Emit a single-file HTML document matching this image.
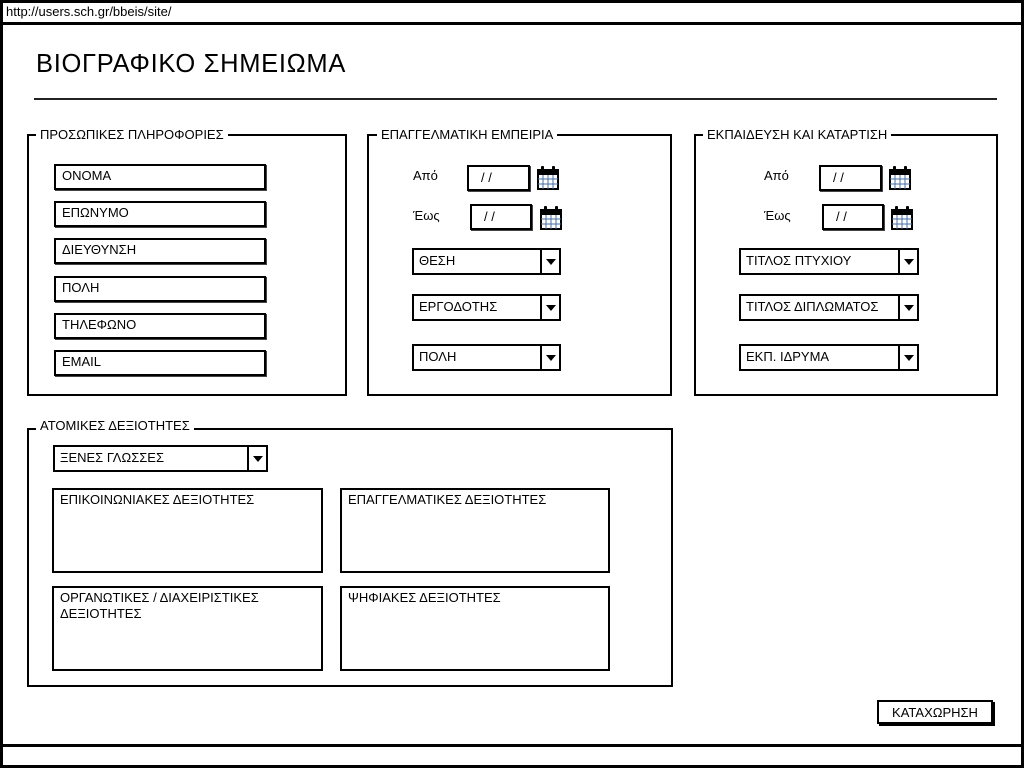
<!DOCTYPE html>
<html><head><meta charset="utf-8"><style>
*{box-sizing:border-box;margin:0;padding:0}
body{width:1024px;height:768px;position:relative;background:#fff;font-family:"Liberation Sans","DejaVu Sans",sans-serif;color:#000;overflow:hidden}
.a{position:absolute}
.frame{left:0;top:0;width:1024px;height:768px;border:3px solid #000}
.url{left:0;top:0;width:1024px;height:25px;border-bottom:3px solid #000;font-size:13px;padding:4px 0 0 6px}
.bot{left:0;top:744px;width:1024px;height:3px;background:#000}
.title{left:36px;top:50px;font-size:25.5px;letter-spacing:0.7px}
.hr{left:34px;top:98px;width:963px;height:2px;background:#222}
.grp{border:2.5px solid #000}
.lbl{background:#fff;font-size:13px;padding:0 4px;white-space:nowrap}
.in{border:2.5px solid #000;height:26px;font-size:13px;padding:2px 0 0 6px;box-shadow:1px 1px 0 #444}
.sel{border:2.5px solid #000;height:27px;font-size:13px;padding:3px 0 0 5px}
.sel .arr{position:absolute;right:0;top:0;width:19px;height:100%;border-left:2px solid #000}
.sel .arr:after{content:"";position:absolute;left:4px;top:9px;border-left:5px solid transparent;border-right:5px solid transparent;border-top:6px solid #000}
.date{border:2.5px solid #000;height:26px;font-size:13px;padding:3px 0 0 12px;box-shadow:1px 1px 0 #444}
.ta{border:2.5px solid #000;font-size:13px;padding:2px 6px;line-height:16px}
.t{font-size:13px}
.btn{left:877px;top:700px;width:116px;height:24px;border:2px solid #000;box-shadow:2px 2px 0 #000;font-size:13px;text-align:center;padding-top:3px}
</style></head><body>
<div class="a frame"></div>
<div class="a url">http://users.sch.gr/bbeis/site/</div>
<div class="a bot"></div>
<div class="a title">ΒΙΟΓΡΑΦΙΚΟ ΣΗΜΕΙΩΜΑ</div>
<div class="a hr"></div>

<svg width="0" height="0" style="position:absolute"><defs><g id="cal"><rect x="1" y="4" width="20" height="19" fill="#fff" stroke="#000" stroke-width="2"/><rect x="1" y="4" width="20" height="5" fill="#000"/><path d="M1 13H21M1 18H21M6 9V23M11 9V23M16 9V23" stroke="#4a6fa5" stroke-width="1"/><rect x="4" y="0" width="3" height="7" rx="1" fill="#000"/><rect x="15" y="0" width="3" height="7" rx="1" fill="#000"/></g></defs></svg>

<div class="a grp" style="left:27px;top:134px;width:320px;height:262px"></div>
<div class="a lbl" style="left:36px;top:127px">ΠΡΟΣΩΠΙΚΕΣ ΠΛΗΡΟΦΟΡΙΕΣ</div>
<div class="a in" style="left:54px;top:164px;width:212px">ΟΝΟΜΑ</div>
<div class="a in" style="left:54px;top:201px;width:212px">ΕΠΩΝΥΜΟ</div>
<div class="a in" style="left:54px;top:238px;width:212px">ΔΙΕΥΘΥΝΣΗ</div>
<div class="a in" style="left:54px;top:276px;width:212px">ΠΟΛΗ</div>
<div class="a in" style="left:54px;top:313px;width:212px">ΤΗΛΕΦΩΝΟ</div>
<div class="a in" style="left:54px;top:350px;width:212px">EMAIL</div>

<div class="a grp" style="left:367px;top:134px;width:305px;height:262px"></div>
<div class="a lbl" style="left:377px;top:127px">ΕΠΑΓΓΕΛΜΑΤΙΚΗ ΕΜΠΕΙΡΙΑ</div>
<div class="a t" style="left:413px;top:168px">Από</div>
<div class="a date" style="left:467px;top:165px;width:63px">/ /</div>
<svg class="a" style="left:537px;top:166px" width="23" height="24"><use href="#cal"/></svg>
<div class="a t" style="left:413px;top:208px">Έως</div>
<div class="a date" style="left:470px;top:204px;width:62px">/ /</div>
<svg class="a" style="left:540px;top:206px" width="23" height="24"><use href="#cal"/></svg>
<div class="a sel" style="left:412px;top:248px;width:149px">ΘΕΣΗ<span class="arr"></span></div>
<div class="a sel" style="left:412px;top:294px;width:149px">ΕΡΓΟΔΟΤΗΣ<span class="arr"></span></div>
<div class="a sel" style="left:412px;top:344px;width:149px">ΠΟΛΗ<span class="arr"></span></div>

<div class="a grp" style="left:694px;top:134px;width:304px;height:262px"></div>
<div class="a lbl" style="left:703px;top:127px">ΕΚΠΑΙΔΕΥΣΗ ΚΑΙ ΚΑΤΑΡΤΙΣΗ</div>
<div class="a t" style="left:764px;top:168px">Από</div>
<div class="a date" style="left:819px;top:165px;width:63px">/ /</div>
<svg class="a" style="left:889px;top:166px" width="23" height="24"><use href="#cal"/></svg>
<div class="a t" style="left:764px;top:208px">Έως</div>
<div class="a date" style="left:822px;top:204px;width:62px">/ /</div>
<svg class="a" style="left:891px;top:206px" width="23" height="24"><use href="#cal"/></svg>
<div class="a sel" style="left:739px;top:248px;width:180px">ΤΙΤΛΟΣ ΠΤΥΧΙΟΥ<span class="arr"></span></div>
<div class="a sel" style="left:739px;top:294px;width:180px">ΤΙΤΛΟΣ ΔΙΠΛΩΜΑΤΟΣ<span class="arr"></span></div>
<div class="a sel" style="left:739px;top:344px;width:180px">ΕΚΠ. ΙΔΡΥΜΑ<span class="arr"></span></div>

<div class="a grp" style="left:27px;top:428px;width:646px;height:259px"></div>
<div class="a lbl" style="left:36px;top:418px">ΑΤΟΜΙΚΕΣ ΔΕΞΙΟΤΗΤΕΣ</div>
<div class="a sel" style="left:53px;top:445px;width:215px">ΞΕΝΕΣ ΓΛΩΣΣΕΣ<span class="arr"></span></div>
<div class="a ta" style="left:52px;top:488px;width:271px;height:85px">ΕΠΙΚΟΙΝΩΝΙΑΚΕΣ ΔΕΞΙΟΤΗΤΕΣ</div>
<div class="a ta" style="left:340px;top:488px;width:270px;height:85px">ΕΠΑΓΓΕΛΜΑΤΙΚΕΣ ΔΕΞΙΟΤΗΤΕΣ</div>
<div class="a ta" style="left:52px;top:586px;width:271px;height:85px">ΟΡΓΑΝΩΤΙΚΕΣ / ΔΙΑΧΕΙΡΙΣΤΙΚΕΣ ΔΕΞΙΟΤΗΤΕΣ</div>
<div class="a ta" style="left:340px;top:586px;width:270px;height:85px">ΨΗΦΙΑΚΕΣ ΔΕΞΙΟΤΗΤΕΣ</div>

<div class="a btn">ΚΑΤΑΧΩΡΗΣΗ</div>
</body></html>
